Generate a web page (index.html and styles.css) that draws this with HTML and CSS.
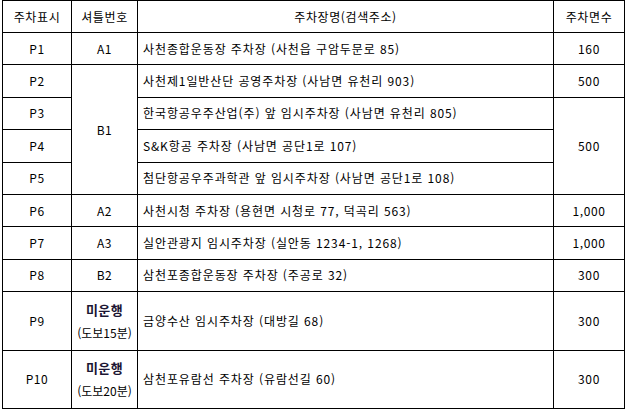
FILE: index.html
```html
<!DOCTYPE html>
<html lang="ko">
<head>
<meta charset="utf-8">
<link rel="stylesheet" href="styles.css">
</head>
<body>
<table class="parking">
  <colgroup>
    <col class="c1"><col class="c2"><col class="c3"><col class="c4">
  </colgroup>
  <tr class="row head">
    <td>주차표시</td><td>셔틀번호</td><td>주차장명(검색주소)</td><td>주차면수</td>
  </tr>
  <tr class="row">
    <td>P1</td><td>A1</td><td class="name">사천종합운동장 주차장 (사천읍 구암두문로 85)</td><td>160</td>
  </tr>
  <tr class="row">
    <td>P2</td><td rowspan="4">B1</td><td class="name">사천제1일반산단 공영주차장 (사남면 유천리 903)</td><td>500</td>
  </tr>
  <tr class="row">
    <td>P3</td><td class="name">한국항공우주산업(주) 앞 임시주차장 (사남면 유천리 805)</td><td rowspan="3">500</td>
  </tr>
  <tr class="row">
    <td>P4</td><td class="name">S&amp;K항공 주차장 (사남면 공단1로 107)</td>
  </tr>
  <tr class="row">
    <td>P5</td><td class="name">첨단항공우주과학관 앞 임시주차장 (사남면 공단1로 108)</td>
  </tr>
  <tr class="row">
    <td>P6</td><td>A2</td><td class="name">사천시청 주차장 (용현면 시청로 77, 덕곡리 563)</td><td>1,000</td>
  </tr>
  <tr class="row">
    <td>P7</td><td>A3</td><td class="name">실안관광지 임시주차장 (실안동 1234-1, 1268)</td><td>1,000</td>
  </tr>
  <tr class="row">
    <td>P8</td><td>B2</td><td class="name">삼천포종합운동장 주차장 (주공로 32)</td><td>300</td>
  </tr>
  <tr class="row tall">
    <td>P9</td><td><div class="off">미운행</div><div class="walk">(도보15분)</div></td><td class="name">금양수산 임시주차장 (대방길 68)</td><td>300</td>
  </tr>
  <tr class="row tall">
    <td>P10</td><td><div class="off">미운행</div><div class="walk">(도보20분)</div></td><td class="name">삼천포유람선 주차장 (유람선길 60)</td><td>300</td>
  </tr>
</table>
</body>
</html>
```
FILE: styles.css
```css
html, body {
  margin: 0;
  padding: 0;
  background: #ffffff;
}
body {
  padding: 0 0 0 2px;
  font-family: "Noto Sans CJK KR", "Liberation Sans", sans-serif;
  font-size: 12px;
  color: #000000;
}
.parking {
  border-collapse: collapse;
  table-layout: fixed;
  width: 622px;
}
.c1 { width: 69px; }
.c2 { width: 66px; }
.c3 { width: 416px; }
.c4 { width: 71px; }
.parking td {
  border: 1px solid #000000;
  padding: 0;
  text-align: center;
  vertical-align: middle;
  line-height: 14px;
  white-space: nowrap;
  letter-spacing: 0.6px;
}
.parking td.name {
  text-align: left;
  padding-left: 5px;
  letter-spacing: 0.9px;
}
.row { height: 32.4px; }
.row.head { height: 32px; }
.row.tall { height: 58.5px; }
.off {
  font-weight: bold;
  font-size: 13px;
  color: #1c1633;
  line-height: 16px;
  letter-spacing: 0.3px;
}
.walk {
  margin-top: 8px;
  line-height: 14px;
  letter-spacing: 0;
}
```
